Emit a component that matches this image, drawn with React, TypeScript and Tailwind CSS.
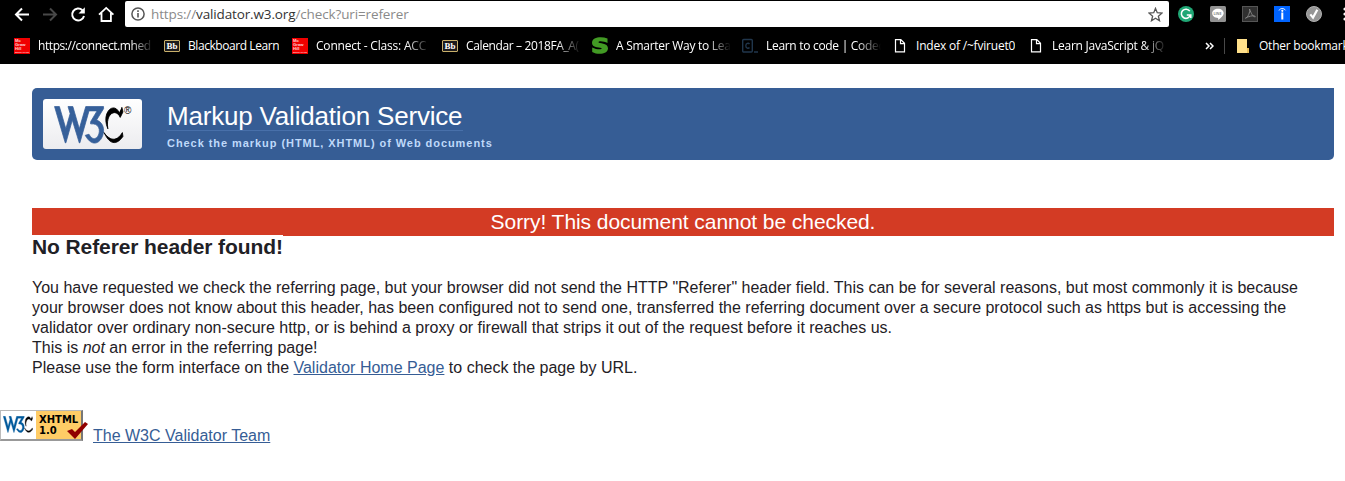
import React from "react";

function W3CMark({ className, blue = "#36609a" }: { className: string; blue?: string }) {
  return (
    <svg viewBox="1 4 130 70" preserveAspectRatio="none" className={className}>
      <path fill={blue} stroke={blue} strokeWidth="1.4" d="M36,5l12,41l12-41h33v4l-13,21c30,10,2,69-21,28l7-2c15,27,33,-22,3,-19v-4l12-20h-15l-17,59h-1l-13-42l-12,42h-1l-20-67h9l12,41l8-28l-4-13h9" />
      <path fill="#000" stroke="#000" strokeWidth="1.6" d="M94,53c15,32,30,14,35,7l-1-7c-16,26-32,3-34,0M122,16c-10-21-34,0-21,30c-5-30 16,-38 23,-21l5-10l-2-9" />
    </svg>
  );
}

function McGraw() {
  return (
    <svg viewBox="0 0 16 16" className="h-4 w-4 font-['Liberation_Sans',sans-serif] font-bold" fill="#ffd6d6">
      <rect width="16" height="16" fill="#f00000" />
      <text x="1" y="4" fontSize="4.2">Mc</text>
      <text x="1" y="7.800" fontSize="4.2">Graw</text>
      <text x="1" y="11.600" fontSize="4.2">Hill</text>
      <text x="1" y="14.900" fontSize="2.4">EDUCATION</text>
    </svg>
  );
}

function Blackboard() {
  return (
    <div className="flex h-3 w-4 items-center justify-center rounded-[1px] border border-[#c9b06a] bg-[#1c1a1c] font-['Liberation_Serif',serif] text-[9px] leading-none font-bold text-white">
      Bb
    </div>
  );
}

function PageIcon() {
  return (
    <svg viewBox="0 0 16 16" className="h-4 w-4" fill="none" stroke="#fff" strokeWidth="1.2">
      <path d="M3.5 1.6h5.3l3.7 3.7v8.6h-9zM8.5 1.6v4h4" />
    </svg>
  );
}

function Mark({ icon, label, box, fade = false, spacing = "tracking-[-0.37px]" }: {
  icon: React.ReactNode; label: string; box: string; fade?: boolean; spacing?: string;
}) {
  return (
    <div className={`flex h-5 shrink-0 items-center ${box}`}>
      <div className="flex w-4 shrink-0 justify-center">{icon}</div>
      <span className={`ml-2 ${spacing} overflow-hidden whitespace-nowrap ${fade ? "flex-1 [mask-image:linear-gradient(to_right,#000_calc(100%-24px),transparent)]" : ""}`}>{label}</span>
    </div>
  );
}

function Toolbar() {
  return (
    <div className="flex h-7 items-center">
      <svg viewBox="0 0 125 27" className="h-[27px] w-[125px] shrink-0" fill="none" stroke="#fff" strokeWidth="2">
        <path d="M29 13.5H16M22 7.5l-6 6 6 6" />
        <path stroke="#484848" d="M43 13.5h13M50 7.5l6 6-6 6" />
        <path d="M82.4 9.2A6 6 0 1 0 84 15" />
        <path fill="#fff" stroke="none" d="M84.8 6.2v6.3h-6.3z" />
        <path strokeWidth="1.8" d="M99 13.7l7.2-6.8 7.2 6.8M101.5 12v8h9.4v-8" />
      </svg>
      <div className="flex h-[26px] w-[1044px] shrink-0 items-center rounded-[2px] bg-white pl-1.5">
        <svg viewBox="0 0 14 14" className="h-3.5 w-3.5" fill="none" stroke="#555">
          <circle cx="7" cy="7" r="6.1" strokeWidth="1.5" />
          <path d="M7 6v4.5M7 3.3v1.6" strokeWidth="1.6" />
        </svg>
        <span className="ml-1.5 flex-1 whitespace-nowrap text-[13.5px] tracking-[-0.13px] text-[#8a8a8a]">
          https://<span className="text-[#333]">validator.w3.org</span>/check?uri=referer
        </span>
        <svg viewBox="0 0 24 24" className="mr-1.5 h-[15px] w-[15px]" fill="none" stroke="#555" strokeWidth="2.1">
          <path d="m12 2.2 2.8 7 7.5.6-5.7 4.9 1.8 7.3-6.4-3.9L5.6 22l1.8-7.3L1.7 9.8l7.5-.6z" />
        </svg>
      </div>
      <div className="flex shrink-0 items-center gap-4 pl-[9px]">
        <svg viewBox="0 0 16 16" className="h-4 w-4" fill="none" stroke="#fff" strokeWidth="1.5">
          <circle cx="8" cy="8" r="8" fill="#20a775" stroke="none" />
          <path d="M11.8 5.2A4.6 4.6 0 1 0 12.4 9M8.8 9h4v3" />
        </svg>
        <svg viewBox="0 0 16 16" className="h-4 w-4">
          <rect width="16" height="16" rx="1.5" fill="#929292" />
          <path fill="#fff" d="M8 2.8c3.2 0 5.7 2 5.7 4.5S10.8 12 8 14c.3-1 .3-1.500 0-2-3.400-.1-5.800-2-5.800-4.700S4.800 2.800 8 2.800z" />
          <text x="3.400" y="8.700" fontSize="3.600" fontWeight="700" fill="#888">LINE</text>
        </svg>
        <svg viewBox="0 0 16 16" className="h-4 w-4" fill="none">
          <rect x=".5" y=".5" width="15" height="15" fill="#303030" stroke="#555" />
          <path stroke="#858585" d="M7.500 3c2 5 3.500 8 5.800 7.800 0-1.500-5-1.500-9.800 1.400 2.500-1 4.800-6 4-9.200z" />
        </svg>
        <svg viewBox="0 0 16 16" className="h-4 w-4" fill="none" stroke="#fff">
          <rect width="16" height="16" fill="#0064ff" stroke="none" />
          <path d="M8.300 6.500V13.500" strokeWidth="2" />
          <circle cx="8.300" cy="4.800" r="1.100" fill="#fff" stroke="none" />
          <path d="M5 4.500c1-2.500 5-2.700 6.500-.2" strokeWidth=".9" />
        </svg>
        <svg viewBox="0 0 16 16" className="h-4 w-4" fill="none">
          <circle cx="8" cy="8" r="7.500" fill="#969696" stroke="#b0b0b0" />
          <path d="m4.300 8.400 2.700 3.200 4.300-7.800" stroke="#fff" strokeWidth="2.200" />
        </svg>
        <svg viewBox="0 0 4 16" className="ml-[5px] h-4 w-1" fill="#fff">
          <circle cx="2" cy="3" r="1.600" /><circle cx="2" cy="8" r="1.600" /><circle cx="2" cy="13" r="1.600" />
        </svg>
      </div>
    </div>
  );
}

function Bookmarks() {
  return (
    <div className="flex h-9 items-center pl-3.5 text-[12px] text-white">
      <Mark icon={<McGraw />} label="https://connect.mhed" box="w-[150px] pr-[10px]" spacing="tracking-[-0.42px]" fade />
      <Mark icon={<Blackboard />} label="Blackboard Learn" box="w-[128px]" spacing="tracking-[-0.43px]" />
      <Mark icon={<McGraw />} label="Connect - Class: ACC" box="w-[150px] pr-[12px]" spacing="tracking-[-0.2px]" fade />
      <Mark icon={<Blackboard />} label="Calendar – 2018FA_A(" box="w-[150px] pr-[11px]" fade />
      <Mark
        icon={<svg viewBox="0 0 18 18" className="h-[18px] w-[18px] shrink-0"><path fill="#429a24" d="M16.500 1.500v4.500c-3-1.500-9-2.500-9-.7 0 1.600 9.500.2 9.500 6 0 6-10 7-15.800 3.700v-4.500c4 2 9.500 2.600 9.500.8C10.700 9.700 1 11.500 1 5.900 1 .2 10-.8 16.500 1.500z" /></svg>}
        label="A Smarter Way to Lea" box="w-[150px] pr-[11px]" spacing="tracking-[-0.28px]" fade
      />
      <Mark
        icon={<svg viewBox="0 0 16 16" className="h-4 w-4" fill="none" stroke="#20364c"><rect x=".7" y="1.500" width="9.600" height="12.500" rx="1" strokeWidth="1.400" /><path d="M7.500 6c-1-1.300-3.700-.8-3.700 1.800s2.700 3 3.700 1.700M12 14h4" strokeWidth="1.300" /></svg>}
        label="Learn to code | Codec" box="w-[150px] pr-[11px]" spacing="tracking-[-0.3px]" fade
      />
      <Mark icon={<PageIcon />} label="Index of /~fviruet0" box="w-[136px]" spacing="tracking-[-0.2px]" />
      <Mark icon={<PageIcon />} label="Learn JavaScript & jQ" box="w-[177px] pr-[38px]" spacing="tracking-[-0.24px]" fade />
      <svg viewBox="0 0 9 8" className="h-2 w-[9px] shrink-0" fill="none" stroke="#fff" strokeWidth="1.500"><path d="m1 1 3 3-3 3M5 1l3 3-3 3" /></svg>
      <div className="ml-2.5 h-4 w-px shrink-0 bg-[#494949]" />
      <Mark
        icon={<svg viewBox="0 0 16 16" className="h-4 w-4"><path fill="#ffe08a" d="M2 1h10v9h2v5H2z" /><path fill="#e8bd55" d="M12 10h2v5h-2z" /></svg>}
        label="Other bookmarks" box="ml-2.5 w-[120px]" spacing="tracking-[-0.24px]"
      />
    </div>
  );
}

export default function App() {
  return (
    <div className="h-[481px] w-[1345px] overflow-hidden bg-white font-['Liberation_Sans',Arial,sans-serif] text-[#1f2126]">
      <header className="h-16 overflow-hidden bg-black font-['Open_Sans','Noto_Sans',sans-serif]">
        <Toolbar />
        <Bookmarks />
      </header>
      <main>
        <section className="mt-6 ml-8 flex h-[72px] w-[1302px] rounded-l-[5px] rounded-br-[5px] bg-[#365d95]">
          <div className="mt-[11px] ml-[11px] flex h-[50px] w-[99px] rounded-[3px] bg-linear-to-b from-white to-[#ececef] pt-[7px] pl-[11px]">
            <W3CMark className="h-[38px] w-[70px]" />
            <span className="text-[10px] leading-[9px] text-black">®</span>
          </div>
          <div className="ml-[25px] pt-[14px]">
            <h1 className="h-[29px] w-[296px] border-b border-[#4870aa] text-[26px] leading-[28px] tracking-[-0.19px] whitespace-nowrap text-white">Markup Validation Service</h1>
            <p className="mt-1.5 text-[11px] leading-3 font-bold tracking-[0.94px] whitespace-nowrap text-[#bfd9fa]">Check the markup (HTML, XHTML) of Web documents</p>
          </div>
        </section>
        <section className="ml-8 w-[1302px] pt-12">
          <h2 className="h-7 bg-[#d33b24] text-center text-[21px] leading-7 tracking-[-0.06px] text-white">Sorry! This document cannot be checked.</h2>
          <h3 className="-mt-px h-6 w-[251px] bg-white text-[21px] leading-6 font-bold tracking-[-0.1px] whitespace-nowrap">No Referer header found!</h3>
          <p className="mt-[19px] text-[16px] leading-5 whitespace-nowrap">
            You have requested we check the referring page, but your browser did not send the HTTP "Referer" header field. This can be for several reasons, but most commonly it is because<br />
            your browser does not know about this header, has been configured not to send one, transferred the referring document over a secure protocol such as https but is accessing the<br />
            validator over ordinary non-secure http, or is behind a proxy or firewall that strips it out of the request before it reaches us.<br />
            This is <em>not</em> an error in the referring page!<br />
            Please use the form interface on the <a className="text-[#365d95] underline">Validator Home Page</a> to check the page by URL.
          </p>
        </section>
        <footer className="mt-8 flex h-8">
          <div className="relative flex h-[31px] w-[83px] border-t border-r-2 border-b-2 border-l border-t-[#b8b8b8] border-r-[#777] border-b-[#999] border-l-[#bbb] bg-[#ffcc66]">
            <div className="h-full w-[35px] bg-white pt-[5px] pl-[2px]"><W3CMark className="h-[17px] w-[30px]" blue="#005a9c" /></div>
            <div className="pt-[3px] pl-[3px] font-['DejaVu_Sans',sans-serif] text-[10px] leading-[11px] font-bold text-black">XHTML<br />1.0</div>
            <svg viewBox="0 0 22 18" className="absolute top-[10px] left-[65px] h-[18px] w-[22px]" fill="#900000"><path d="M1 10l5-2 3 3L19 1l3 2L9 18z" /></svg>
          </div>
          <a className="mt-4 ml-[10px] text-[16px] leading-5 text-[#365d95] underline">The W3C Validator Team</a>
        </footer>
      </main>
    </div>
  );
}
